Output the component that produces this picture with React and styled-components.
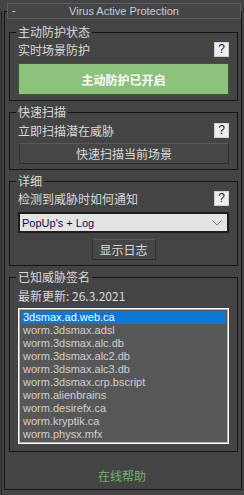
import React from "react";
import styled, { createGlobalStyle } from "styled-components";

const GlobalStyle = createGlobalStyle`
  html, body {
    margin: 0;
    padding: 0;
    background: #444444;
  }
  body {
    font-family: "Noto Sans CJK SC", "Noto Sans", sans-serif;
    font-size: 12px;
    color: #dadada;
  }
`;

const Page = styled.div`
  width: 244px;
  height: 495px;
  box-sizing: border-box;
  padding: 11px 0 0 1px;
  background: #444444;
  overflow: hidden;
`;

const ScrollEdge = styled.div`
  border-left: 1px solid #1c1c1c;
  padding-left: 2px;
  height: 100%;
  box-sizing: border-box;
`;

// rollout frame, header sits over its top border
const Rollout = styled.div`
  width: 238px;
  box-sizing: border-box;
  border: 1px solid #141414;
  padding: 0 0 5px 0;
`;

const RolloutHeader = styled.div`
  margin: -9px 0 0 2px;
  width: 234px;
  height: 16px;
  box-sizing: border-box;
  border: 1px solid #5e5e5e;
  background: #444444;
  display: flex;
  align-items: center;
  position: relative;
  font-family: "Liberation Sans", sans-serif;
  font-size: 11px;
  color: #c3cee0;
`;

const Collapse = styled.span`
  position: absolute;
  left: 4px;
  top: 0;
  line-height: 13px;
  color: #d8d8d8;
`;

const HeaderTitle = styled.span`
  flex: 1;
  text-align: center;
  line-height: 14px;
`;

const Group = styled.fieldset`
  margin: ${(p) => p.$top || 4}px 3px 0 4px;
  padding: 0 8px ${(p) => p.$bottom || 5}px 8px;
  border: 1px solid #141414;
  min-width: 0;
`;

const Legend = styled.legend`
  padding: 0 2px;
  margin-left: -2px;
  line-height: 14px;
  font-size: 12px;
  color: #dadada;
`;

const Row = styled.div`
  display: flex;
  align-items: flex-end;
  justify-content: space-between;
  height: 15px;
  margin-top: ${(p) => p.$top || 3}px;
  line-height: 14px;
`;

const HelpButton = styled.div`
  width: 15px;
  height: 15px;
  box-sizing: border-box;
  background: #efefef;
  border: 1px solid #d0d0d0;
  color: #101050;
  font-family: "Liberation Sans", sans-serif;
  font-size: 12px;
  line-height: 13px;
  text-align: center;
`;

const GreenButton = styled.div`
  margin-top: 6px;
  height: 32px;
  box-sizing: border-box;
  background: #8cc27b;
  border: 1px solid #3a5a32;
  color: #ffffff;
  font-weight: bold;
  font-size: 12px;
  display: flex;
  align-items: center;
  justify-content: center;
`;

const Button = styled.div`
  margin: ${(p) => p.$top || 5}px auto 0 ${(p) => (p.$width ? "auto" : "1px")};
  width: ${(p) => (p.$width ? p.$width + "px" : "auto")};
  height: 21px;
  box-sizing: border-box;
  background: #464646;
  border: 1px solid #2a2a2a;
  border-top-color: #5a5a5a;
  border-left-color: #303030;
  color: #dadada;
  font-size: 12px;
  display: flex;
  align-items: center;
  justify-content: center;
`;

const Select = styled.div`
  margin-top: 6px;
  height: 21px;
  box-sizing: border-box;
  background: #e4e4e4;
  border: 2px solid #1e1e1e;
  display: flex;
  align-items: center;
  justify-content: space-between;
  padding: 0 5px 0 2px;
  color: #0c0c4a;
  font-family: "Liberation Sans", sans-serif;
  font-size: 11px;
`;

const InfoLine = styled.div`
  margin-top: 4px;
  line-height: 16px;
  color: #dadada;
`;

const List = styled.div`
  margin-top: 4px;
  height: 136px;
  box-sizing: border-box;
  border: 1px solid #ffffff;
  box-shadow: inset 0 0 0 1px #b4b4b4;
  background: #575757;
  padding: 2px 2px 1px;
  overflow: hidden;
`;

const ListItem = styled.div`
  height: 13px;
  line-height: 13px;
  padding-left: 2px;
  font-family: "Liberation Sans", sans-serif;
  font-size: 11px;
  white-space: nowrap;
  color: ${(p) => (p.$selected ? "#ffffff" : "#d0d0d0")};
  background: ${(p) => (p.$selected ? "#0a78d7" : "transparent")};
`;

const OnlineHelp = styled.div`
  margin-top: 16px;
  line-height: 16px;
  text-align: center;
  color: #6db56d;
  padding-right: 2px;
`;

const Chevron = () => (
  <svg width="10" height="6" viewBox="0 0 10 6">
    <path d="M0.5 0.5 L5 5 L9.5 0.5" fill="none" stroke="#7a7a7a" strokeWidth="1" />
  </svg>
);

const signatures = [
  "3dsmax.ad.web.ca",
  "worm.3dsmax.adsl",
  "worm.3dsmax.alc.db",
  "worm.3dsmax.alc2.db",
  "worm.3dsmax.alc3.db",
  "worm.3dsmax.crp.bscript",
  "worm.alienbrains",
  "worm.desirefx.ca",
  "worm.kryptik.ca",
  "worm.physx.mfx",
];

export default function App() {
  return (
    <>
      <GlobalStyle />
      <Page>
        <ScrollEdge>
          <Rollout>
            <RolloutHeader>
              <Collapse>-</Collapse>
              <HeaderTitle>Virus Active Protection</HeaderTitle>
            </RolloutHeader>

            <Group $top={6}>
              <Legend>主动防护状态</Legend>
              <Row>
                <span>实时场景防护</span>
                <HelpButton>?</HelpButton>
              </Row>
              <GreenButton>主动防护已开启</GreenButton>
            </Group>

            <Group>
              <Legend>快速扫描</Legend>
              <Row $top={4}>
                <span>立即扫描潜在威胁</span>
                <HelpButton>?</HelpButton>
              </Row>
              <Button>快速扫描当前场景</Button>
            </Group>

            <Group>
              <Legend>详细</Legend>
              <Row>
                <span>检测到威胁时如何通知</span>
                <HelpButton>?</HelpButton>
              </Row>
              <Select>
                <span>PopUp's + Log</span>
                <Chevron />
              </Select>
              <Button $width={64} $top={6}>显示日志</Button>
            </Group>

            <Group $bottom={7}>
              <Legend>已知威胁签名</Legend>
              <InfoLine>最新更新: 26.3.2021</InfoLine>
              <List>
                {signatures.map((s, i) => (
                  <ListItem key={s} $selected={i === 0}>
                    {s}
                  </ListItem>
                ))}
              </List>
            </Group>

            <OnlineHelp>在线帮助</OnlineHelp>
          </Rollout>
        </ScrollEdge>
      </Page>
    </>
  );
}
